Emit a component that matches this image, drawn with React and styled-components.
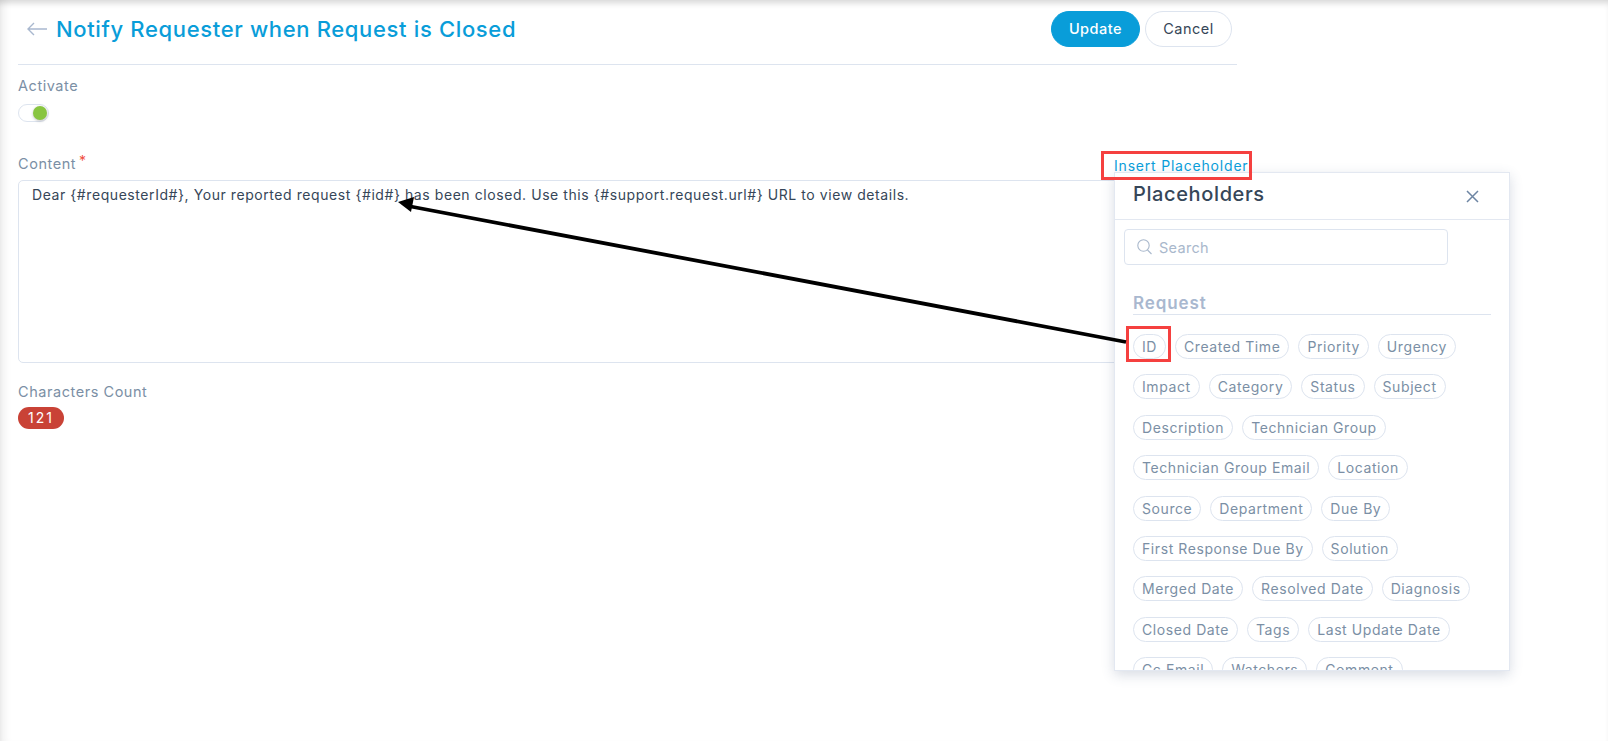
import React from 'react';
import styled, { createGlobalStyle } from 'styled-components';

const Global = createGlobalStyle`
  html, body { margin: 0; padding: 0; background: #fff; }
  body { font-family: Inter, "Open Sans", "Liberation Sans", sans-serif; color: #364658; overflow: hidden; }
  #root { height: 741px; }
`;
const Page = styled.div`
  position: relative; width: 1608px; height: 741px; overflow: hidden; box-sizing: border-box;
  padding: 0 371px 0 18px;
  background: #fff;
  box-shadow: inset 0 6px 6px -3px rgba(0,0,0,.16), inset 10px 0 8px -6px rgba(0,0,0,.07);
`;
const Header = styled.header`
  display: flex; align-items: center; justify-content: space-between;
  height: 65px; box-sizing: border-box; padding: 0 5px 7px 9px;
  border-bottom: 1px solid #dde4ef;
`;
const TitleWrap = styled.div`display: flex; align-items: center; gap: 9px;`;
const Title = styled.h1`
  margin: 0; font-size: 22px; font-weight: 500; color: #099dd9; letter-spacing: 0.65px; line-height: 30px;
`;
const Actions = styled.div`display: flex; gap: 5px;`;
const Button = styled.button`
  height: 36px; border-radius: 18px; padding: 0; letter-spacing: .5px;
  font: ${p => p.$primary ? 500 : 400} 14.5px Inter, sans-serif;
  width: ${p => p.$primary ? '89px' : '87px'};
  background: ${p => p.$primary ? '#099dd9' : '#fff'};
  color: ${p => p.$primary ? '#fff' : '#364658'};
  border: 1px solid ${p => p.$primary ? '#099dd9' : '#dde4ef'};
`;
const Label = styled.div`font-size: 14.5px; color: #7b8fa5; line-height: 20px; letter-spacing: .55px;`;
const ActivateBlock = styled.section`padding-top: 11px;`;
const Toggle = styled.div`
  position: relative; width: 31px; height: 18px; margin-top: 8px; box-sizing: border-box;
  border: 1px solid #dde4ef; border-radius: 9px; background: #fff;
  &::after {
    content: ''; position: absolute; right: 1px; top: 1px; width: 14px; height: 14px;
    border-radius: 50%; background: #88c540; box-shadow: 0 1px 3px rgba(0,0,0,.25);
  }
`;
const ContentHead = styled.div`
  display: flex; justify-content: space-between; align-items: flex-end; margin-top: 32px; height: 20px;
`;
const Req = styled.span`color: #f04e3e; font-size: 14px; line-height: 0; margin-left: 3px; vertical-align: 3px;`;
const LinkBox = styled.div`
  position: absolute; left: 1101px; top: 151px; width: 151px; height: 29px; box-sizing: border-box;
  border: 3px solid #f5403f; display: flex; align-items: center; padding-left: 10px; z-index: 3;
  font-size: 14px; letter-spacing: .8px; color: #099dd9; white-space: nowrap;
`;
const Editor = styled.div`
  margin-top: 6px; height: 183px; box-sizing: border-box; padding: 4px 13px;
  border: 1px solid #dde4ef; border-radius: 5px; font-size: 14px; line-height: 20px; letter-spacing: .57px; color: #364658;
`;
const CountBlock = styled.section`margin-top: 19px;`;
const Badge = styled.div`
  width: 46px; height: 22px; margin-top: 5px; border-radius: 11px; background: #c94236; color: #fff;
  font-size: 14px; line-height: 22px; text-align: center; letter-spacing: 2px;
`;
const Panel = styled.aside`
  position: absolute; left: 1114px; top: 172px; width: 396px; height: 499px; box-sizing: border-box;
  background: #fff; border: 1px solid #e3e8f1; overflow: hidden; z-index: 2;
  box-shadow: 0 4px 12px rgba(60,80,120,.2);
`;
const PanelHead = styled.div`
  display: flex; justify-content: space-between; align-items: center; height: 47px; box-sizing: border-box;
  padding: 0 30px 0 18px; border-bottom: 1px solid #e3e8f1;
`;
const PanelTitle = styled.h2`margin: 0 0 5px; font-size: 20px; font-weight: 500; letter-spacing: .62px; color: #364658;`;
const Search = styled.div`
  display: flex; align-items: center; gap: 7px; margin: 9px 0 0 9px; width: 324px; height: 36px; box-sizing: border-box;
  padding-left: 12px; border: 1px solid #dde4ef; border-radius: 4px; color: #a9b8cc; font-size: 14.5px; letter-spacing: .3px;
`;
const Section = styled.h3`
  margin: 28px 18px 0 18px; height: 21px; line-height: 20px; border-bottom: 1px solid #dde4ef;
  font-size: 17px; font-weight: 600; letter-spacing: .9px; color: #a9b8cf;
`;
const Chips = styled.div`display: flex; flex-wrap: wrap; gap: 15.4px 9px; padding: 19px 30px 0 18px;`;
const Chip = styled.span`
  height: 25px; box-sizing: border-box; padding: 0 8px; border: 1px solid #dde4ef; border-radius: 13px;
  font-size: 14px; line-height: 23px; letter-spacing: .58px; color: #7b8fa5; white-space: nowrap; position: relative;
  ${p => p.$marked && `
    &::after { content: ''; position: absolute; left: -8px; right: -6px; top: -9px; bottom: -4px; border: 3px solid #f5403f; }
  `}
`;
const Overlay = styled.svg`position: absolute; left: 0; top: 0; z-index: 4; pointer-events: none;`;

const names = ['ID','Created Time','Priority','Urgency','Impact','Category','Status','Subject','Description','Technician Group','Technician Group Email','Location','Source','Department','Due By','First Response Due By','Solution','Merged Date','Resolved Date','Diagnosis','Closed Date','Tags','Last Update Date','Cc Email','Watchers','Comment'];

export default function App() {
  return (
    <Page>
      <Global />
      <Header>
        <TitleWrap>
          <svg width="20" height="14" viewBox="0 0 20 14" fill="none" stroke="#a9b8cf" strokeWidth="1.4"><path d="M20 7H1M7 1 1 7l6 6" /></svg>
          <Title>Notify Requester when Request is Closed</Title>
        </TitleWrap>
        <Actions>
          <Button $primary>Update</Button>
          <Button>Cancel</Button>
        </Actions>
      </Header>
      <ActivateBlock>
        <Label>Activate</Label>
        <Toggle />
      </ActivateBlock>
      <ContentHead><Label>Content<Req>*</Req></Label></ContentHead>
      <LinkBox>Insert Placeholder</LinkBox>
      <Editor>Dear {'{#requesterId#}'}, Your reported request {'{#id#}'} has been closed. Use this {'{#support.request.url#}'} URL to view details.</Editor>
      <CountBlock>
        <Label>Characters Count</Label>
        <Badge>121</Badge>
      </CountBlock>
      <Panel>
        <PanelHead>
          <PanelTitle>Placeholders</PanelTitle>
          <svg width="13" height="13" viewBox="0 0 13 13" stroke="#6d85a3" strokeWidth="1.5"><path d="M1 1l11 11M12 1 1 12" /></svg>
        </PanelHead>
        <Search>
          <svg width="15" height="16" viewBox="0 0 15 16" fill="none" stroke="#a9b8cc" strokeWidth="1.1"><circle cx="6.5" cy="6.5" r="5.7" /><path d="M10.5 11l4 4" /></svg>
          Search
        </Search>
        <Section>Request</Section>
        <Chips>{names.map((n, i) => <Chip key={n} $marked={i === 0}>{n}</Chip>)}</Chips>
      </Panel>
      <Overlay width="1608" height="741" viewBox="0 0 1608 741">
        <path d="M1126 342 408 206" stroke="#000" strokeWidth="3.8" fill="none" />
        <path d="M398 202 414 197 411 212Z" fill="#000" />
      </Overlay>
    </Page>
  );
}
